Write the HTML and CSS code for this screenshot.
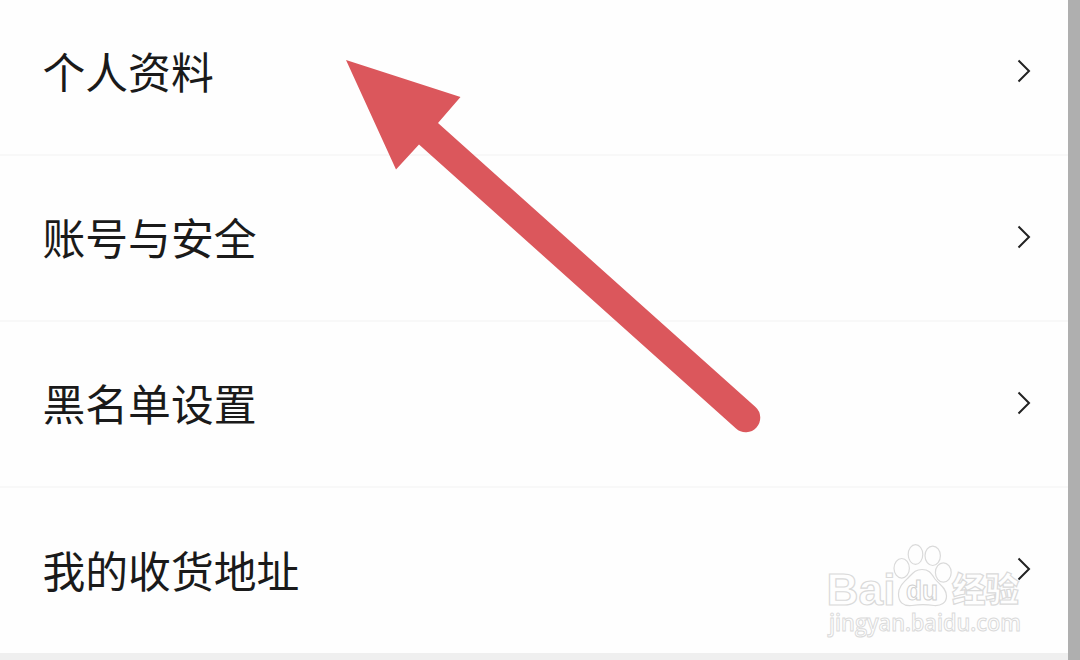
FILE: index.html
```html
<!DOCTYPE html>
<html lang="zh-CN">
<head>
    <meta charset="UTF-8">
    <meta name="viewport" content="width=device-width, initial-scale=1.0">
    <title>设置</title>
    <link rel="stylesheet" href="styles.css">
</head>
<body>
    <div class="screen">
        <ul class="settings">
            <li class="row">
                <span class="label">个人资料</span>
                <svg class="chevron" viewBox="0 0 14 24"><path d="M1.5 1.5L12 12L1.5 22.5"/></svg>
            </li>
            <li class="row">
                <span class="label">账号与安全</span>
                <svg class="chevron" viewBox="0 0 14 24"><path d="M1.5 1.5L12 12L1.5 22.5"/></svg>
            </li>
            <li class="row">
                <span class="label">黑名单设置</span>
                <svg class="chevron" viewBox="0 0 14 24"><path d="M1.5 1.5L12 12L1.5 22.5"/></svg>
            </li>
            <li class="row">
                <span class="label">我的收货地址</span>
                <svg class="chevron" viewBox="0 0 14 24"><path d="M1.5 1.5L12 12L1.5 22.5"/></svg>
            </li>
        </ul>
        <div class="edge"></div>

        <svg class="arrow" viewBox="0 0 420 380">
            <path d="M6 10L120.500 47L98 73L415.500 357A14.500 14.500 0 0 1 396 378.500L79 94.500L56 119.500Z"/>
        </svg>

        <svg class="watermark" viewBox="0 0 210 110">
            <text class="brand" x="6.500" y="65" textLength="69" lengthAdjust="spacingAndGlyphs">Bai</text>
            <g class="paw">
                <ellipse cx="81.700" cy="28.300" rx="7.700" ry="9.800"/>
                <ellipse cx="95.500" cy="14.500" rx="7.300" ry="9.900"/>
                <ellipse cx="112.700" cy="15.800" rx="7.700" ry="9.700"/>
                <ellipse cx="123.300" cy="32.500" rx="7.900" ry="9.700"/>
                <path d="M88 38C93 33 95 29.500 102 29.500C109 29.500 111 33 115 39C119 44 126.500 48 126.500 56C126.500 63 121 66 114 65.500C107 64.500 99 64.500 92 65.500C83 66.500 78.500 62 78.500 54C78.500 47 83 43 88 38Z"/>
            </g>
            <text class="du" x="86" y="60" textLength="32" lengthAdjust="spacingAndGlyphs">du</text>
            <text class="cn" x="132" y="61.500" textLength="67" lengthAdjust="spacingAndGlyphs">经验</text>
            <text class="url" x="9" y="90.500" textLength="192" lengthAdjust="spacingAndGlyphs">jingyan.baidu.com</text>
        </svg>
    </div>
</body>
</html>
```
FILE: styles.css
```css
* { box-sizing: border-box; }
body {
    margin: 0;
    background-color: #fefefe;
    font-family: "Noto Sans CJK SC", sans-serif;
}
.screen {
    position: relative;
    display: flex;
    width: 1080px;
    height: 660px;
    overflow: hidden;
}
/* the list is scrolled up a little, so the first row is cut at the top */
.settings {
    flex: 1;
    height: 670px;
    margin: -10px 0 0;
    padding: 0;
    list-style: none;
    background-color: #efefef;
}
.row {
    display: flex;
    align-items: center;
    justify-content: space-between;
    height: 166px;
    padding: 0 37px 3px 42.5px;
    background-color: #fefefe;
    border-bottom: 2px solid #f8f8f8;
}
.row:last-child {
    height: 165px;
    border-bottom: none;
}
.label {
    color: #1a1a1a;
    font-size: 42.8px;
    line-height: 60px;
    padding-bottom: 1px;
}
.chevron {
    position: relative;
    z-index: 2;
    width: 14px;
    height: 24px;
    fill: none;
    stroke: #222;
    stroke-width: 2;
}
.edge { width: 12px; background-color: #afafaf; }

.arrow {
    position: absolute;
    left: 340px;
    top: 50px;
    width: 420px;
    height: 380px;
    overflow: visible;
    fill: #db575c;
}

/* white shapes and letters with a thin grey rim */
.watermark {
    position: absolute;
    left: 820px;
    top: 540px;
    width: 210px;
    height: 110px;
    z-index: 1;
    fill: #fefefe;
    stroke: #dadada;
    stroke-width: 1.2;
    font-family: "Liberation Sans", sans-serif;
}
.brand { font-size: 45px; font-weight: bold; }
.du { font-size: 27px; font-weight: bold; stroke: #d0d0d0; stroke-width: 1; }
.cn { font-family: "Noto Sans CJK SC", sans-serif; font-size: 34px; font-weight: 900; }
.url { font-family: "Open Sans", sans-serif; font-size: 23px; font-weight: 600; stroke-width: 1; }
```
